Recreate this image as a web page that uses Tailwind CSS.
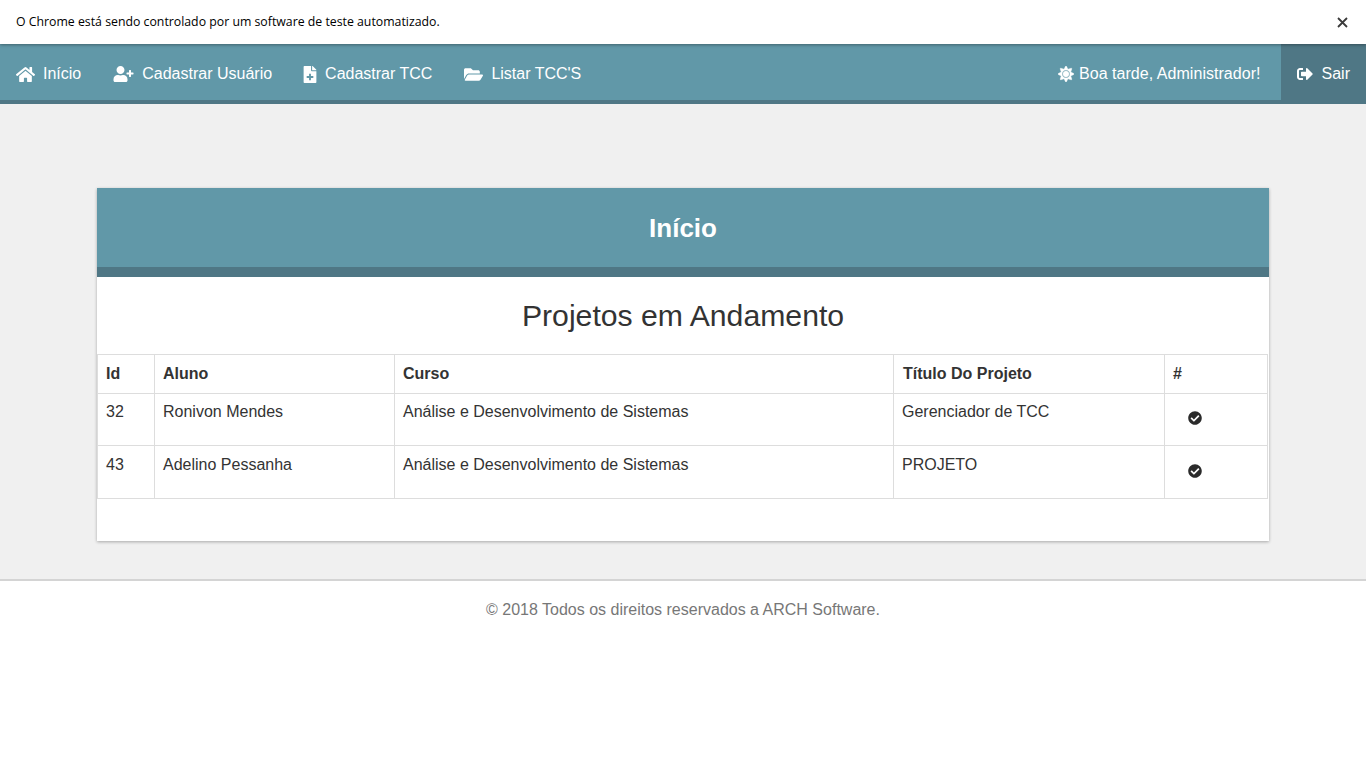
<!DOCTYPE html>
<html lang="pt-BR">
<head>
<meta charset="utf-8">
<title>Início</title>
<script src="https://cdn.jsdelivr.net/npm/@tailwindcss/browser@4"></script>
</head>
<body class="bg-white font-['Liberation_Sans',Arial,sans-serif] text-[16px] text-[#333]">
<div class="min-h-[768px] flex flex-col">
  <div class="relative z-20 h-[44px] bg-white flex items-center justify-between pl-4 pr-[18px] shadow-[0_1px_3px_rgba(0,0,0,0.35)]">
    <span class="font-['Open_Sans',sans-serif] text-[12.3px] text-black pt-[1px]">O Chrome está sendo controlado por um software de teste automatizado.</span>
    <svg class="w-[11px] h-[11px]" viewBox="0 0 11 11"><path d="M1 1l9 9M10 1l-9 9" stroke="#3a3a3a" stroke-width="1.8" fill="none"/></svg>
  </div>
  <nav class="h-[60px] bg-[#6198a8] border-b-4 border-[#4f7785] flex justify-between text-white">
    <div class="flex">
      <a class="flex items-center gap-2 px-4 h-[56px] pt-1">
        <svg class="w-[19px] h-[17px] fill-white" viewBox="0 0 576 512"><path d="M280.37 148.26L96 300.11V464a16 16 0 0 0 16 16l112.06-.29a16 16 0 0 0 15.92-16V368a16 16 0 0 1 16-16h64a16 16 0 0 1 16 16v95.64a16 16 0 0 0 16 16.05L464 480a16 16 0 0 0 16-16V300L295.67 148.26a12.19 12.19 0 0 0-15.3 0zM571.6 251.47L488 182.56V44.05a12 12 0 0 0-12-12h-56a12 12 0 0 0-12 12v72.61L318.47 43a48 48 0 0 0-61 0L4.34 251.47a12 12 0 0 0-1.6 16.9l25.5 31A12 12 0 0 0 45.15 301l235.22-193.74a12.19 12.19 0 0 1 15.3 0L530.9 301a12 12 0 0 0 16.9-1.6l25.5-31a12 12 0 0 0-1.7-16.93z"/></svg>
        <span>Início</span>
      </a>
      <a class="flex items-center gap-2 px-4 h-[56px] pt-1">
        <svg class="w-[21px] h-[16px] fill-white" viewBox="0 0 640 512"><path d="M624 208h-64v-64c0-8.8-7.2-16-16-16h-32c-8.8 0-16 7.2-16 16v64h-64c-8.8 0-16 7.2-16 16v32c0 8.8 7.2 16 16 16h64v64c0 8.8 7.2 16 16 16h32c8.8 0 16-7.2 16-16v-64h64c8.8 0 16-7.2 16-16v-32c0-8.8-7.2-16-16-16zm-400 48c70.7 0 128-57.3 128-128S294.7 0 224 0 96 57.3 96 128s57.3 128 128 128zm89.6 32h-16.7c-22.2 10.2-46.9 16-72.9 16s-50.6-5.8-72.9-16h-16.7C60.2 288 0 348.2 0 422.4V464c0 26.5 21.5 48 48 48h352c26.5 0 48-21.5 48-48v-41.6c0-74.2-60.2-134.4-134.4-134.4z"/></svg>
        <span>Cadastrar Usuário</span>
      </a>
      <a class="flex items-center gap-2 pl-[15px] pr-4 h-[56px] pt-1">
        <svg class="w-[14px] h-[17px] fill-white" viewBox="0 0 384 512"><path fill-rule="evenodd" d="M224 136V0H24C10.7 0 0 10.7 0 24v464c0 13.3 10.7 24 24 24h336c13.3 0 24-10.7 24-24V160H248c-13.2 0-24-10.8-24-24zM164 232h56v72h72v56h-72v72h-56v-72H92v-56h72zM384 121.900v6.100H256V0h6.100c6.400 0 12.500 2.500 17 7l97.900 98c4.500 4.500 7 10.600 7 16.900z"/></svg>
        <span>Cadastrar TCC</span>
      </a>
      <a class="flex items-center gap-2 px-4 h-[56px] pt-1">
        <svg class="w-[19px] h-[17px] fill-white" viewBox="0 0 576 512"><path d="M572.694 292.093L500.27 416.248A63.997 63.997 0 0 1 444.989 448H45.025c-18.523 0-30.064-20.093-20.731-36.093l72.424-124.155A64 64 0 0 1 152 256h399.964c18.523 0 30.064 20.093 20.73 36.093zM152 224h328v-48c0-26.51-21.49-48-48-48H272l-64-64H48C21.49 64 0 85.49 0 112v278.046l69.077-118.418C86.214 242.25 117.989 224 152 224z"/></svg>
        <span>Listar TCC'S</span>
      </a>
    </div>
    <div class="flex">
      <div class="flex items-center gap-[5px] pr-5 h-[56px] pt-1">
        <svg class="w-[16px] h-[16px] fill-white stroke-white stroke-[14]" viewBox="0 0 512 512"><path d="M256 160c-52.900 0-96 43.100-96 96s43.100 96 96 96 96-43.100 96-96-43.100-96-96-96zm246.400 80.500l-94.700-47.300 33.500-100.400c4.500-13.600-8.400-26.500-21.900-21.900l-100.400 33.500-47.400-94.800c-6.400-12.800-24.600-12.800-31 0l-47.300 94.700L92.700 70.800c-13.600-4.500-26.500 8.400-21.900 21.900l33.500 100.400-94.700 47.400c-12.800 6.400-12.800 24.600 0 31l94.700 47.300-33.500 100.500c-4.500 13.600 8.400 26.500 21.900 21.900l100.400-33.500 47.300 94.700c6.400 12.800 24.600 12.800 31 0l47.300-94.700 100.400 33.500c13.600 4.500 26.500-8.400 21.900-21.900l-33.500-100.400 94.700-47.300c13-6.500 13-24.700.2-31.100zm-155.900 106c-49.900 49.900-131.100 49.900-181 0-49.900-49.900-49.900-131.100 0-181 49.900-49.900 131.100-49.900 181 0 49.900 49.900 49.900 131.100 0 181z"/></svg>
        <span class="tracking-[0.04px]">Boa tarde, Administrador!</span>
      </div>
      <a class="flex items-center gap-[9px] px-4 h-[60px] -mb-1 bg-[#4f7785]">
        <svg class="w-[16px] h-[16px] fill-white" viewBox="0 0 512 512"><path d="M497 273L329 441c-15 15-41 4.500-41-17v-96H152c-13.300 0-24-10.700-24-24v-96c0-13.300 10.700-24 24-24h136V88c0-21.400 25.900-32 41-17l168 168c9.300 9.400 9.300 24.600 0 34zM192 436v-40c0-6.600-5.400-12-12-12H96c-17.700 0-32-14.300-32-32V160c0-17.700 14.300-32 32-32h84c6.600 0 12-5.400 12-12V76c0-6.600-5.400-12-12-12H96c-53 0-96 43-96 96v192c0 53 43 96 96 96h84c6.600 0 12-5.400 12-12z"/></svg>
        <span>Sair</span>
      </a>
    </div>
  </nav>
  <main class="bg-[#f0f0f0] pt-[84px] pb-[38px] px-[97px]">
    <section class="bg-white shadow-[0_1px_3px_rgba(0,0,0,0.3)] h-[353px]">
      <header class="h-[89px] bg-[#6198a8] border-b-[10px] border-[#4f7785] flex items-center justify-center pt-[2px]">
        <h1 class="text-white text-[26px] font-bold">Início</h1>
      </header>
      <h2 class="h-[77px] flex items-center justify-center text-[30.2px] text-[#333]">Projetos em Andamento</h2>
      <table class="table-fixed border-collapse w-[1170px] text-left">
        <colgroup>
          <col class="w-[57px]"><col class="w-[240px]"><col class="w-[499px]"><col class="w-[271px]"><col class="w-[103px]">
        </colgroup>
        <thead>
          <tr class="h-[39px] font-bold text-[#333]">
            <th class="border border-[#ddd] px-2 align-middle">Id</th>
            <th class="border border-[#ddd] px-2 align-middle">Aluno</th>
            <th class="border border-[#ddd] px-2 align-middle">Curso</th>
            <th class="border border-[#ddd] pl-[9px] pr-2 align-middle">Título Do Projeto</th>
            <th class="border border-[#ddd] px-2 align-middle">#</th>
          </tr>
        </thead>
        <tbody>
          <tr class="h-[52px]">
            <td class="border border-[#ddd] px-2 pt-[6px] align-top">32</td>
            <td class="border border-[#ddd] px-2 pt-[6px] align-top">Ronivon Mendes</td>
            <td class="border border-[#ddd] px-2 pt-[6px] align-top">Análise e Desenvolvimento de Sistemas</td>
            <td class="border border-[#ddd] px-2 pt-[6px] align-top">Gerenciador de TCC</td>
            <td class="border border-[#ddd] px-2 align-middle">
              <svg class="ml-[15px] mb-[4px] w-[14px] h-[14px] fill-[#2b2b2b]" viewBox="0 0 512 512"><path d="M504 256c0 136.967-111.033 248-248 248S8 392.967 8 256 119.033 8 256 8s248 111.033 248 248zM227.314 387.314l184-184c6.248-6.248 6.248-16.379 0-22.627l-22.627-22.627c-6.248-6.249-16.379-6.249-22.628 0L216 308.118l-70.059-70.059c-6.248-6.248-16.379-6.248-22.628 0l-22.627 22.627c-6.248 6.248-6.248 16.379 0 22.627l104 104c6.249 6.249 16.379 6.249 22.628.001z"/></svg>
            </td>
          </tr>
          <tr class="h-[53px]">
            <td class="border border-[#ddd] px-2 pt-[7px] align-top">43</td>
            <td class="border border-[#ddd] px-2 pt-[7px] align-top">Adelino Pessanha</td>
            <td class="border border-[#ddd] px-2 pt-[7px] align-top">Análise e Desenvolvimento de Sistemas</td>
            <td class="border border-[#ddd] px-2 pt-[7px] align-top">PROJETO</td>
            <td class="border border-[#ddd] px-2 align-middle">
              <svg class="ml-[15px] mb-[2px] w-[14px] h-[14px] fill-[#2b2b2b]" viewBox="0 0 512 512"><path d="M504 256c0 136.967-111.033 248-248 248S8 392.967 8 256 119.033 8 256 8s248 111.033 248 248zM227.314 387.314l184-184c6.248-6.248 6.248-16.379 0-22.627l-22.627-22.627c-6.248-6.249-16.379-6.249-22.628 0L216 308.118l-70.059-70.059c-6.248-6.248-16.379-6.248-22.628 0l-22.627 22.627c-6.248 6.248-6.248 16.379 0 22.627l104 104c6.249 6.249 16.379 6.249 22.628.001z"/></svg>
            </td>
          </tr>
        </tbody>
      </table>
    </section>
  </main>
  <footer class="flex-1 bg-white border-t-2 border-[#d4d4d4] pt-[17px] text-center text-[#777]">© 2018 Todos os direitos reservados a ARCH Software.</footer>
</div>
</body>
</html>
